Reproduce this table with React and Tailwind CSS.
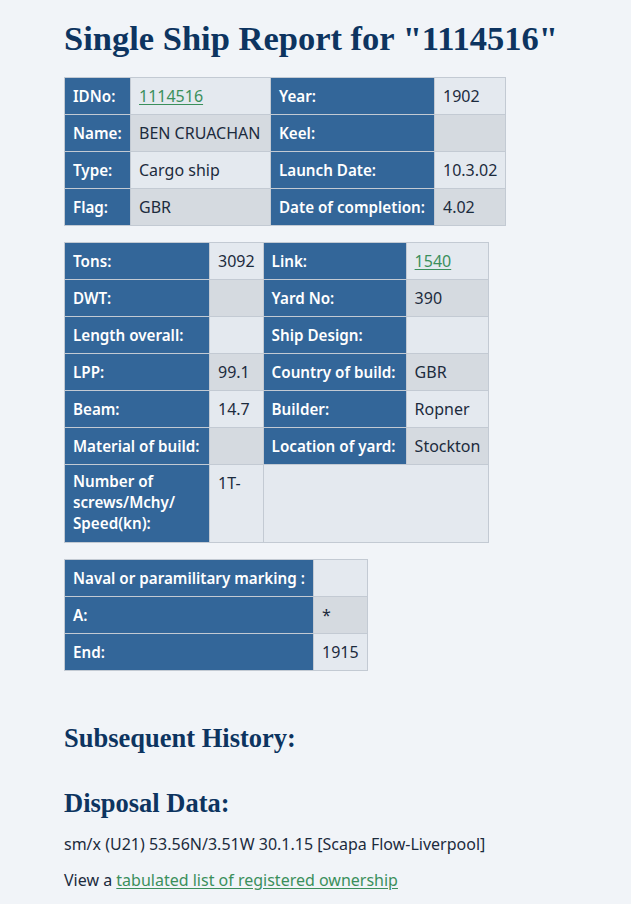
const table1 = [
  ["IDNo:", { link: "1114516" }, "Year:", "1902"],
  ["Name:", "BEN CRUACHAN", "Keel:", ""],
  ["Type:", "Cargo ship", "Launch Date:", "10.3.02"],
  ["Flag:", "GBR", "Date of completion:", "4.02"],
];

const table2 = [
  ["Tons:", "3092", "Link:", { link: "1540" }],
  ["DWT:", "", "Yard No:", "390"],
  ["Length overall:", "", "Ship Design:", ""],
  ["LPP:", "99.1", "Country of build:", "GBR"],
  ["Beam:", "14.7", "Builder:", "Ropner"],
  ["Material of build:", "", "Location of yard:", "Stockton"],
];

const table3 = [
  ["Naval or paramilitary marking :", ""],
  ["A:", "*"],
  ["End:", "1915"],
];

const th = "bg-[#336699] text-white font-semibold text-[15.2px] border border-[#c3cad3] px-2 py-[6px] text-left align-top";
const td = "border border-[#c3cad3] px-2 py-[6px] text-[16px] text-[#1c2b3d] align-top";
const serif = { fontFamily: '"Liberation Serif", serif' };

function renderValue(v) {
  if (typeof v === "object" && v !== null) {
    return (
      <a href="#" className="text-[#3b8f5c] underline underline-offset-2">
        {v.link}
      </a>
    );
  }
  return v;
}

function rowBg(i) {
  return i % 2 === 0 ? "bg-[#e4e9ef]" : "bg-[#d5dae0]";
}

export default function App() {
  return (
    <div
      className="min-h-screen bg-[#f1f4f8] px-16 pt-[18px] pb-4 text-[16px] leading-6 text-[#1c2b3d]"
      style={{ fontFamily: '"Noto Sans", sans-serif' }}
    >
      <h1 className="text-[34.5px] leading-[40px] font-bold text-[#0d3460] mb-[19px] whitespace-nowrap" style={serif}>
        Single Ship Report for "1114516"
      </h1>

      <table className="border-collapse whitespace-nowrap">
        <colgroup>
          <col className="w-[66px]" />
          <col className="w-[140px]" />
          <col className="w-[164px]" />
          <col className="w-[71px]" />
        </colgroup>
        <tbody>
          {table1.map((r, i) => (
            <tr key={i}>
              <th className={th}>{r[0]}</th>
              <td className={`${td} ${rowBg(i)}`}>{renderValue(r[1])}</td>
              <th className={th}>{r[2]}</th>
              <td className={`${td} ${rowBg(i)}`}>{renderValue(r[3])}</td>
            </tr>
          ))}
        </tbody>
      </table>

      <table className="border-collapse mt-4 whitespace-nowrap">
        <colgroup>
          <col className="w-[145px]" />
          <col className="w-[53px]" />
          <col className="w-[143px]" />
          <col className="w-[82px]" />
        </colgroup>
        <tbody>
          {table2.map((r, i) => (
            <tr key={i}>
              <th className={th}>{r[0]}</th>
              <td className={`${td} ${rowBg(i)}`}>{renderValue(r[1])}</td>
              <th className={th}>{r[2]}</th>
              <td className={`${td} ${rowBg(i)}`}>{renderValue(r[3])}</td>
            </tr>
          ))}
          <tr>
            <th className={`${th} whitespace-normal leading-[21px] pb-[8px]`}>
              Number of screws/Mchy/ Speed(kn):
            </th>
            <td className={`${td} bg-[#e4e9ef]`}>1T-</td>
            <td className={`${td} bg-[#e4e9ef]`} colSpan={2}></td>
          </tr>
        </tbody>
      </table>

      <table className="border-collapse mt-4 whitespace-nowrap">
        <colgroup>
          <col className="w-[249px]" />
          <col className="w-[54px]" />
        </colgroup>
        <tbody>
          {table3.map((r, i) => (
            <tr key={i}>
              <th className={th}>{r[0]}</th>
              <td className={`${td} ${rowBg(i)}`}>{r[1]}</td>
            </tr>
          ))}
        </tbody>
      </table>

      <h2 className="mt-[51px] text-[26.5px] leading-[32px] font-bold text-[#0d3460]" style={serif}>
        Subsequent History:
      </h2>

      <h2 className="mt-[33px] text-[26.5px] leading-[32px] font-bold text-[#0d3460]" style={serif}>
        Disposal Data:
      </h2>

      <p className="mt-[13px]">sm/x (U21) 53.56N/3.51W 30.1.15 [Scapa Flow-Liverpool]</p>
      <p className="mt-3">
        View a{" "}
        <a href="#" className="text-[#3b8f5c] underline underline-offset-2">
          tabulated list of registered ownership
        </a>
      </p>
    </div>
  );
}
